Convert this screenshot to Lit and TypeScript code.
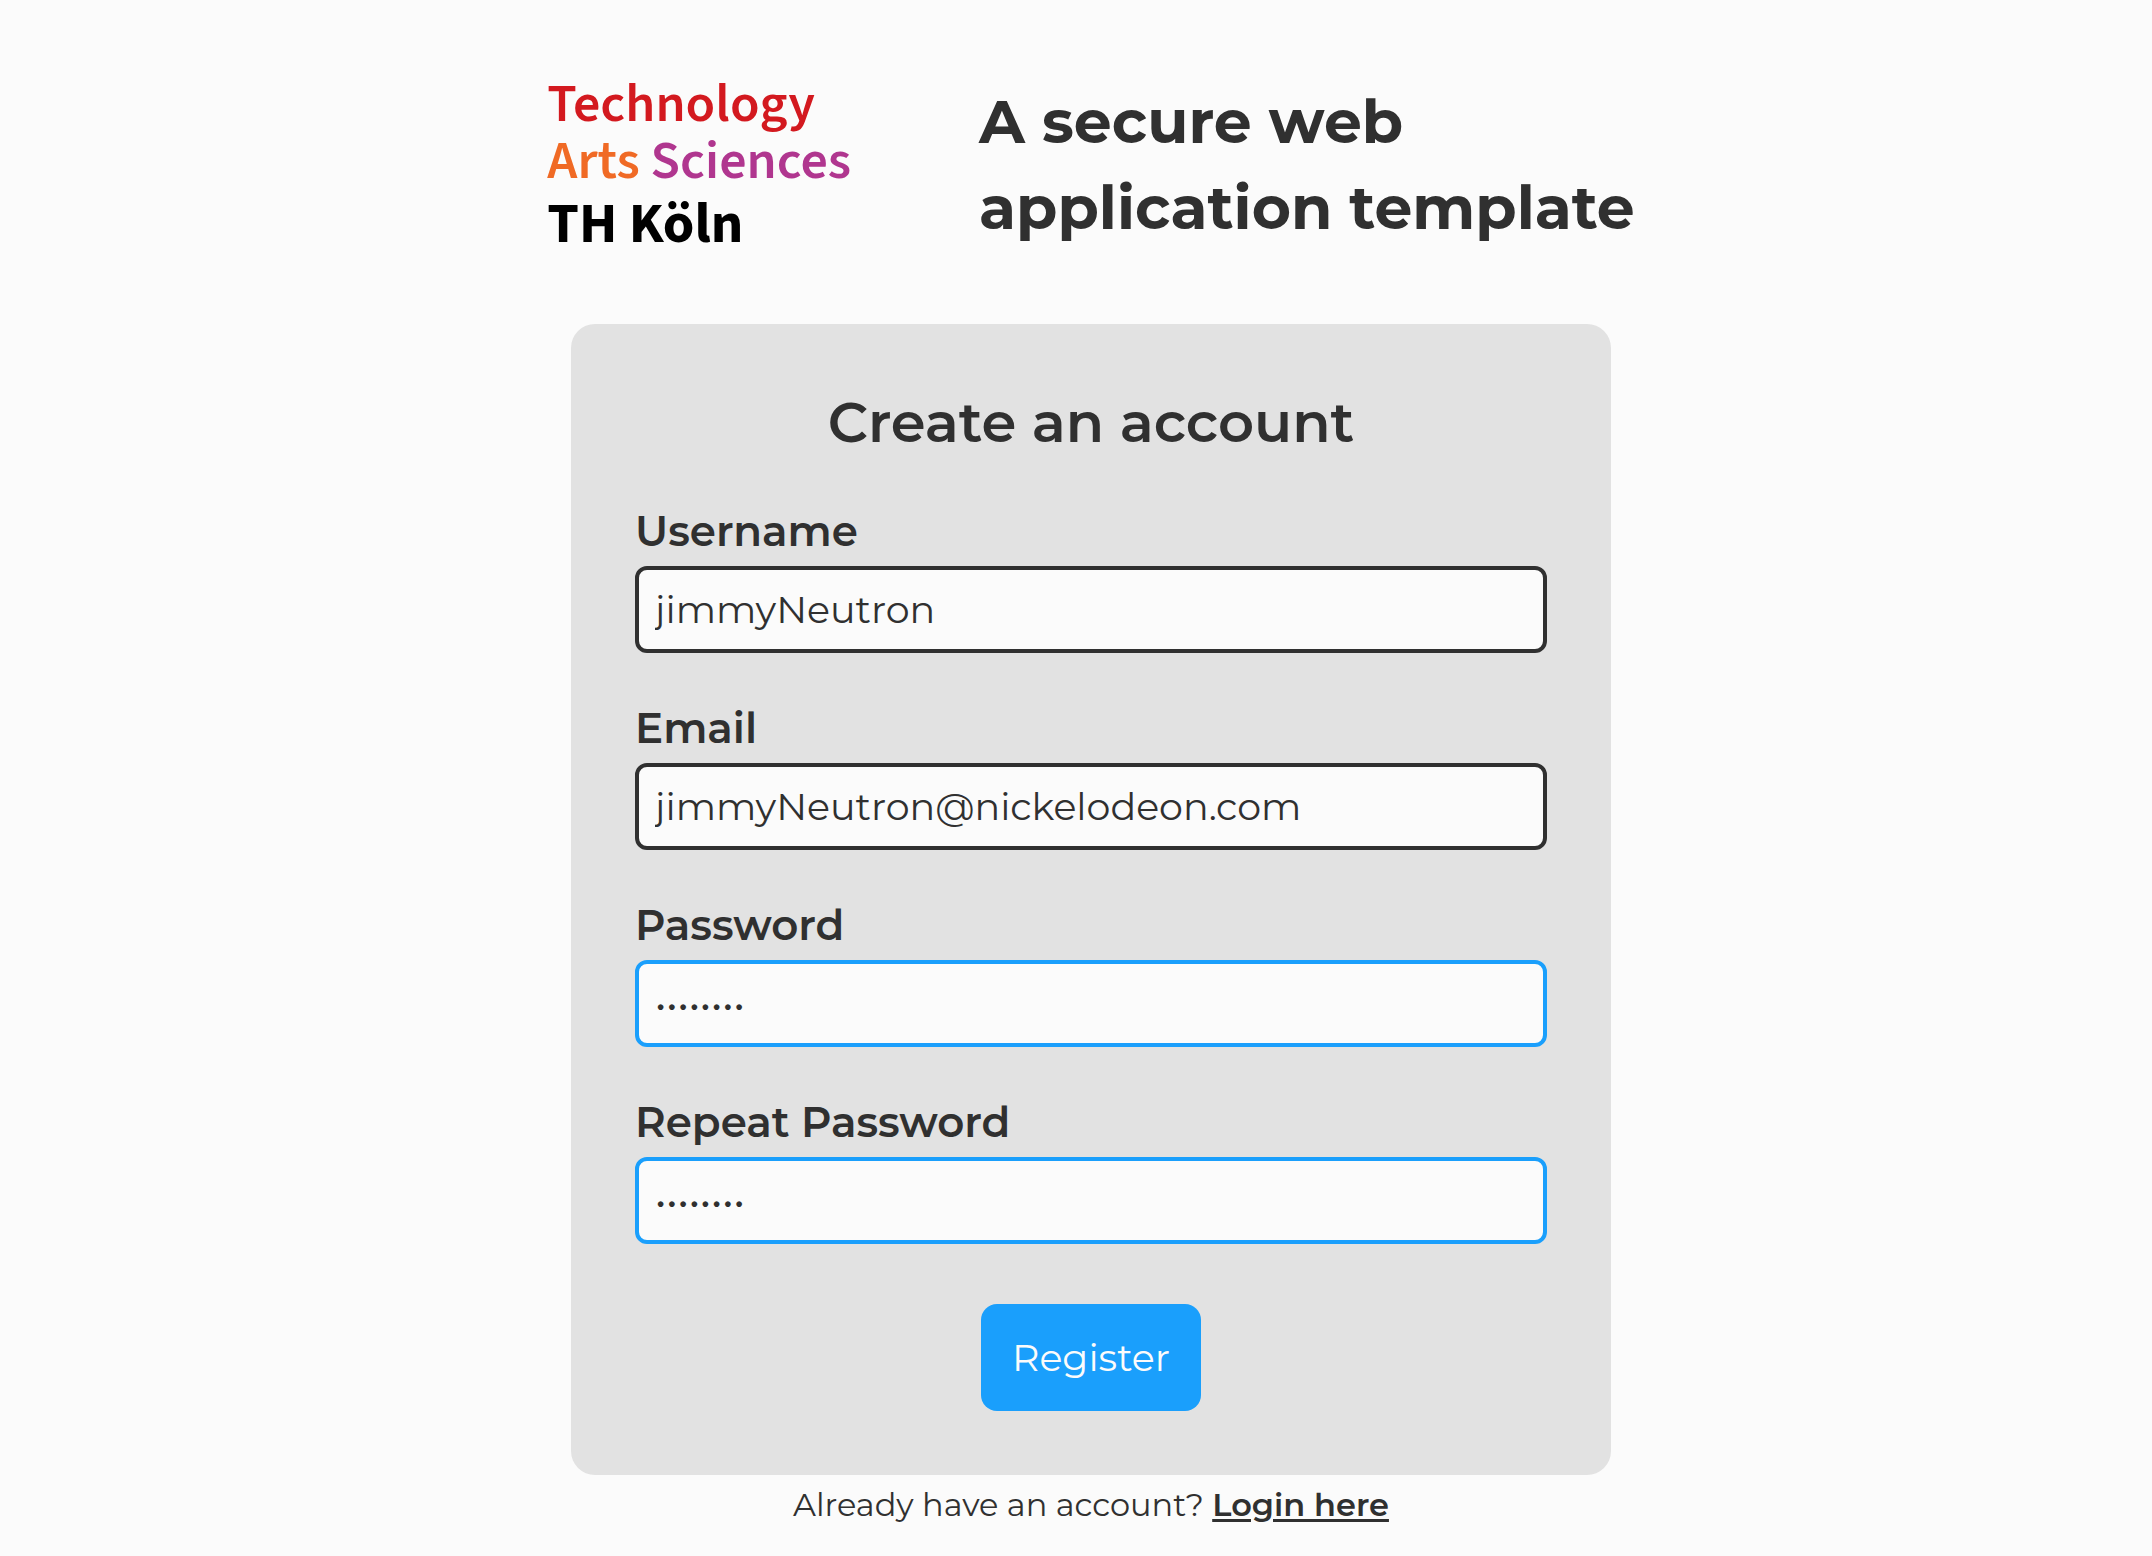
import { LitElement, html, css } from "lit";
import { customElement, state } from "lit/decorators.js";

interface Field {
  id: string;
  label: string;
  type: "text" | "email" | "password";
  value: string;
}

@customElement("brand-logo")
export class BrandLogo extends LitElement {
  static styles = css`
    :host {
      display: block;
      font-family: "Source Sans 3", "Source Sans Pro", Lato, sans-serif;
      font-size: 54px;
      font-weight: 600;
      line-height: 57px;
      white-space: nowrap;
    }
    .technology { color: #d3191f; }
    .arts { color: #f06a25; }
    .sciences { color: #b0368f; }
    .school {
      margin-top: 6px;
      color: #000;
      font-size: 57px;
      font-weight: 700;
    }
  `;

  render() {
    return html`
      <div class="technology">Technology</div>
      <div><span class="arts">Arts</span> <span class="sciences">Sciences</span></div>
      <div class="school">TH Köln</div>
    `;
  }
}

@customElement("app-root")
export class AppRoot extends LitElement {
  static styles = css`
    :host {
      display: block;
      box-sizing: border-box;
      min-height: 100vh;
      padding: 76px 0 24px 30px;
      background: #fbfbfb;
      color: #303030;
      font-family: Montserrat, Inter, "Open Sans", sans-serif;
    }
    .header {
      display: flex;
      justify-content: center;
      align-items: center;
      gap: 128px;
      margin-bottom: 71px;
    }
    .title {
      margin: 0;
      font-size: 60px;
      font-weight: 700;
      line-height: 86px;
      white-space: nowrap;
    }
    .card {
      box-sizing: border-box;
      display: flex;
      flex-direction: column;
      max-width: 1040px;
      margin: 0 auto;
      padding: 64px;
      border-radius: 24px;
      background: #e2e2e2;
    }
    .heading {
      margin: 0 0 48px;
      font-size: 56px;
      font-weight: 600;
      line-height: 68px;
      text-align: center;
    }
    .fields {
      display: grid;
      gap: 48px;
    }
    .field {
      display: grid;
      gap: 8px;
    }
    .label {
      font-size: 42px;
      font-weight: 600;
      line-height: 54px;
    }
    .input {
      box-sizing: border-box;
      width: 100%;
      height: 87px;
      padding: 0 16px;
      border: 4px solid #303030;
      border-radius: 12px;
      outline: none;
      background: #fbfbfb;
      color: inherit;
      font-family: inherit;
      font-size: 38px;
    }
    .input[type="password"] {
      border-color: #1a9ffc;
    }
    .button {
      align-self: center;
      margin-top: 60px;
      height: 107px;
      padding: 0 31px;
      border: 0;
      border-radius: 16px;
      background: #1a9ffc;
      color: #fbfbfb;
      font-family: inherit;
      font-size: 38px;
    }
    .footer {
      margin: 8px 0 0;
      font-size: 32px;
      line-height: 44px;
      text-align: center;
    }
    .link {
      color: inherit;
      font-weight: 600;
      text-decoration-thickness: 3px;
      text-underline-offset: 3px;
    }
  `;

  @state() private fields: Field[] = [
    { id: "username", label: "Username", type: "text", value: "jimmyNeutron" },
    { id: "email", label: "Email", type: "email", value: "jimmyNeutron@nickelodeon.com" },
    { id: "password", label: "Password", type: "password", value: "neutron1" },
    { id: "repeat", label: "Repeat Password", type: "password", value: "neutron1" },
  ];

  private renderField(field: Field) {
    return html`
      <div class="field">
        <label class="label" for=${field.id}>${field.label}</label>
        <input class="input" id=${field.id} name=${field.id} type=${field.type} .value=${field.value} />
      </div>
    `;
  }

  render() {
    return html`
      <header class="header">
        <brand-logo></brand-logo>
        <h1 class="title">A secure web<br />application template</h1>
      </header>
      <main>
        <form class="card" @submit=${(e: Event) => e.preventDefault()}>
          <h2 class="heading">Create an account</h2>
          <div class="fields">${this.fields.map((f) => this.renderField(f))}</div>
          <button class="button" type="submit">Register</button>
        </form>
        <p class="footer">Already have an account? <a class="link" href="#login">Login here</a></p>
      </main>
    `;
  }
}
